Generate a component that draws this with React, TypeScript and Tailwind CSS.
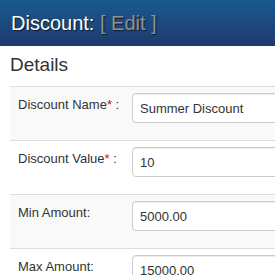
import React from 'react';

const fields = [
  { label: 'Discount Name', required: true, value: 'Summer Discount' },
  { label: 'Discount Value', required: true, value: '10' },
  { label: 'Min Amount', required: false, value: '5000.00' },
  { label: 'Max Amount', required: false, value: '15000.00' },
];

const App: React.FC = () => {
  return (
    <div className="w-[275px] h-[275px] overflow-hidden bg-white font-['Liberation_Sans',Arial,sans-serif]">
      <div className="h-[46px] bg-gradient-to-b from-[#175a90] to-[#1e3a6c] pl-[11px] flex items-center">
        <h1 className="text-[20px] leading-none text-white [text-shadow:1px_1px_1px_#0b1a33] whitespace-nowrap">
          Discount: <span className="text-[#929292] [text-shadow:1px_1px_1px_#0b1a33]">[ Edit ]</span>
        </h1>
      </div>

      <div className="pl-[10px]">
        <h2 className="text-[19px] leading-none text-[#333] pt-[9px] pb-[12px]">Details</h2>
        <div className="border-t border-[#ddd]">
          {fields.map((f, i) => (
            <div
              key={f.label}
              className={`flex items-start pt-[6px] h-[54px] border-b border-[#ddd] ${i % 2 === 0 ? 'bg-[#f9f9f9]' : 'bg-white'}`}
            >
              <label className="block w-[122px] shrink-0 pl-[8px] pt-[2px] text-[13px] text-[#333] whitespace-nowrap">
                {f.label}
                {f.required && <span className="text-[#e00]">*</span>}
                {f.required ? ' :' : ':'}
              </label>
              <input
                readOnly
                value={f.value}
                className="w-[200px] h-[30px] shrink-0 border border-[#ccc] rounded-[4px] bg-white px-[7px] text-[13px] text-[#333] shadow-[inset_0_1px_1px_rgba(0,0,0,0.075)] outline-none"
              />
            </div>
          ))}
        </div>
      </div>
    </div>
  );
};

export default App;
